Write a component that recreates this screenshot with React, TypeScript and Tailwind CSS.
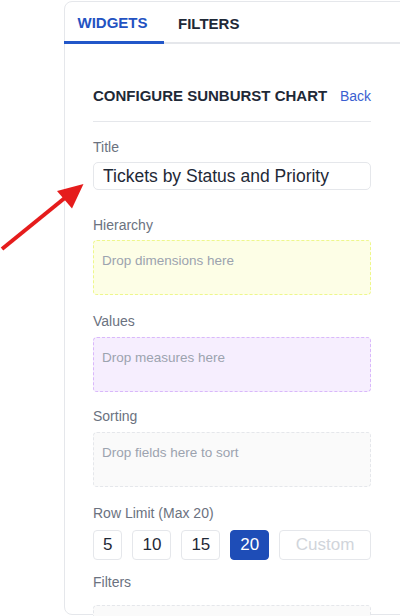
import { useState } from "react";

const ROW_LIMITS = [5, 10, 15, 20];

function DropZone({ text, tone }: { text: string; tone: "yellow" | "purple" | "gray" }) {
  const toneClass =
    tone === "yellow"
      ? "bg-[#fdfee6] border-[#eef78c]"
      : tone === "purple"
      ? "bg-[#f6eefe] border-[#d9b8fb]"
      : "bg-[#fafafa] border-[#e5e7eb]";
  return (
    <div className={`h-[55px] rounded-[4px] border border-dashed px-[8px] pt-[12px] ${toneClass}`}>
      <div className="text-[13.5px] leading-[16px] text-[#9ca3af]">{text}</div>
    </div>
  );
}

function Label({ children }: { children: React.ReactNode }) {
  return <div className="text-[14px] leading-[17px] text-[#6b7280]">{children}</div>;
}

export default function App() {
  const [rowLimit, setRowLimit] = useState(20);

  return (
    <div
      className="relative h-[616px] w-[400px] overflow-hidden bg-white"
      style={{ fontFamily: '"Liberation Sans", Arial, sans-serif' }}
    >
      <div className="ml-16 mt-px h-[614px] w-[345px] rounded-lg border border-[#e5e7eb] bg-white">
        {/* tabs */}
        <div className="flex border-b-2 border-[#e5e7eb]">
          <button className="-mb-[2px] -ml-px w-[100px] border-b-[3px] border-[#2257c9] pb-[10px] pr-[3px] pt-[12px] text-[15px] font-bold leading-[17px] text-[#2352c2]">
            WIDGETS
          </button>
          <button className="px-[14px] pb-[10px] pt-[12px] text-[15px] font-bold leading-[17px] text-[#1f2937]">
            FILTERS
          </button>
        </div>

        <div className="w-[334px] px-7">
          <div className="flex items-center justify-between border-b border-[#e5e7eb] pb-[16px] pt-[43px]">
            <h2 className="text-[15px] font-bold leading-[18px] text-[#1f2937]">CONFIGURE SUNBURST CHART</h2>
            <button className="text-[14px] leading-[18px] text-[#3b5fd1]">Back</button>
          </div>

          <div className="mt-[17px]">
            <Label>Title</Label>
            <input
              className="mt-[6px] h-[28px] w-full rounded-[5px] border border-[#e5e7eb] px-[9px] text-[17.5px] text-[#1f2937] outline-none"
              defaultValue="Tickets by Status and Priority"
            />
          </div>

          <div className="mt-[27px]">
            <Label>Hierarchy</Label>
            <div className="mt-[6px]">
              <DropZone text="Drop dimensions here" tone="yellow" />
            </div>
          </div>

          <div className="mt-[18px]">
            <Label>Values</Label>
            <div className="mt-[7px]">
              <DropZone text="Drop measures here" tone="purple" />
            </div>
          </div>

          <div className="mt-[16px]">
            <Label>Sorting</Label>
            <div className="mt-[7px]">
              <DropZone text="Drop fields here to sort" tone="gray" />
            </div>
          </div>

          <div className="mt-[18px]">
            <Label>Row Limit (Max 20)</Label>
            <div className="mt-[8px] flex gap-[10px]">
              {ROW_LIMITS.map((n) => (
                <button
                  key={n}
                  onClick={() => setRowLimit(n)}
                  className={
                    n === rowLimit
                      ? "h-[30px] rounded-[4px] border border-[#1e4db7] bg-[#1e4db7] px-[9px] text-[17px] text-white"
                      : "h-[30px] rounded-[4px] border border-[#e5e7eb] bg-white px-[9px] text-[17px] text-[#1f2937]"
                  }
                >
                  {n}
                </button>
              ))}
              <input
                placeholder="Custom"
                className="h-[30px] min-w-0 flex-1 rounded-[4px] border border-[#e5e7eb] text-center text-[17px] outline-none placeholder:text-[#d1d5db]"
              />
            </div>
          </div>

          <div className="mt-[14px]">
            <Label>Filters</Label>
            <div className="mt-[14px] h-[55px] rounded-[4px] border border-dashed border-[#e5e7eb] bg-[#fafafa]" />
          </div>
        </div>
      </div>

      {/* annotation arrow */}
      <svg className="absolute left-0 top-[175px]" width="90" height="80" viewBox="0 175 90 80">
        <line x1="2" y1="249" x2="66" y2="197" stroke="#e51c1c" strokeWidth="4" />
        <polygon points="83.5,184 57,191 72,208.5" fill="#e51c1c" />
      </svg>
    </div>
  );
}
